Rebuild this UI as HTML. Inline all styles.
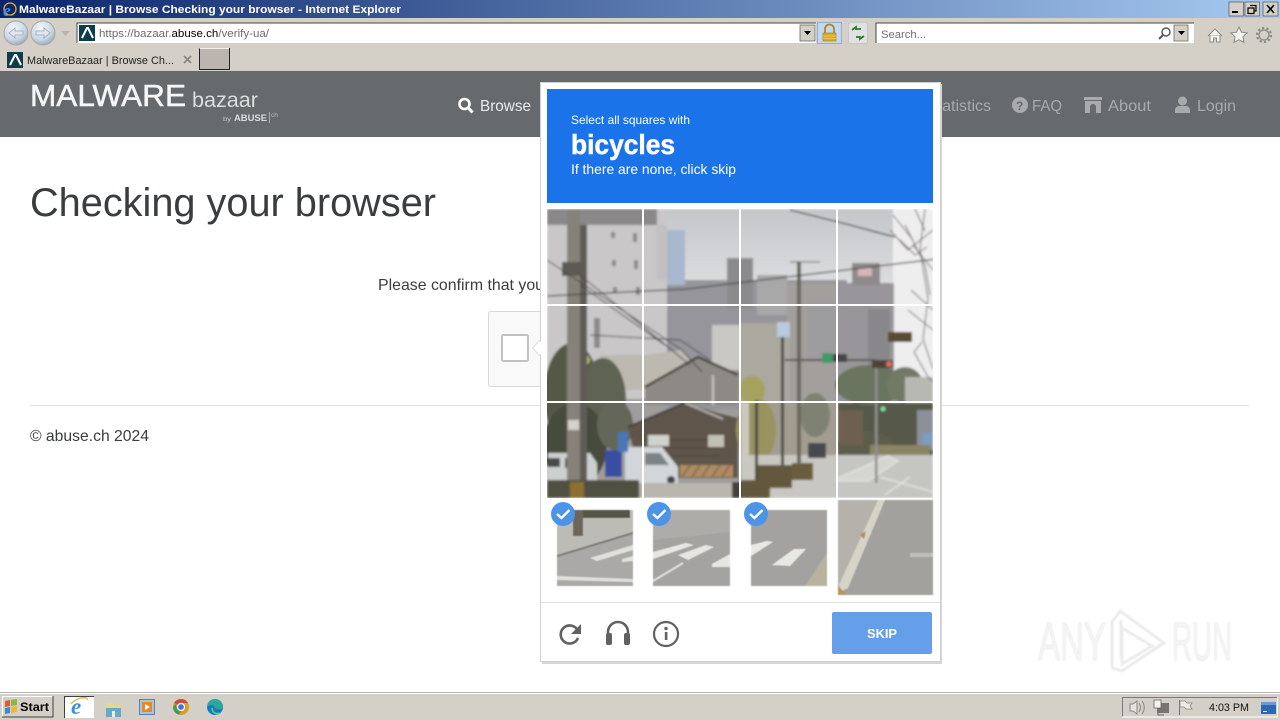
<!DOCTYPE html>
<html><head><meta charset="utf-8"><title>MalwareBazaar | Browse Checking your browser</title>
<style>html,body{margin:0;padding:0;background:#fff;overflow:hidden}svg{display:block;font-family:"Liberation Sans",sans-serif}</style></head>
<body>
<svg xmlns="http://www.w3.org/2000/svg" width="1280" height="720" viewBox="0 0 1280 720">
<defs>
<linearGradient id="tb" x1="0" x2="1" y1="0" y2="0"><stop offset="0" stop-color="#0a246a"/><stop offset="1" stop-color="#a6caf0"/></linearGradient>
<linearGradient id="sky" x1="0" x2="0" y1="0" y2="1"><stop offset="0" stop-color="#c4c6c9"/><stop offset="1" stop-color="#e6e7e8"/></linearGradient>
<radialGradient id="nb" cx=".4" cy=".3" r=".8"><stop offset="0" stop-color="#f4f7fb"/><stop offset=".6" stop-color="#c9d6e6"/><stop offset="1" stop-color="#8d9aa8"/></radialGradient>
<filter id="bl"><feGaussianBlur stdDeviation="1"/></filter>
<filter id="wb" x="-10%" y="-10%" width="120%" height="120%"><feGaussianBlur stdDeviation=".6"/></filter>
<clipPath id="c1"><rect x="557" y="510" width="76" height="76"/></clipPath>
<clipPath id="c2"><rect x="653" y="510" width="77" height="76"/></clipPath>
<clipPath id="c3"><rect x="751" y="510" width="76" height="76"/></clipPath>
<clipPath id="c4"><rect x="838" y="500" width="95" height="95"/></clipPath>
<clipPath id="cm"><rect x="547" y="209" width="386" height="289"/></clipPath>
</defs>

<rect width="1280" height="720" fill="#fff"/>

<!-- title bar -->
<rect width="1280" height="18" fill="url(#tb)"/>
<g>
<circle cx="10" cy="9" r="6" fill="none" stroke="#e0b030" stroke-width="1.3"/>
<text x="3" y="16" font-size="17" font-weight="bold" font-style="italic" fill="#3f8fd8" font-family="Liberation Serif">e</text>
<text x="19" y="13" font-size="11" font-weight="bold" fill="#fff" textLength="382" lengthAdjust="spacingAndGlyphs">MalwareBazaar | Browse Checking your browser - Internet Explorer</text>
</g>
<g stroke="#404040" stroke-width=".6">
<rect x="1229" y="2" width="14.5" height="14" fill="#d4d0c8"/><rect x="1245" y="2" width="14.5" height="14" fill="#d4d0c8"/><rect x="1263" y="2" width="15" height="14" fill="#d4d0c8"/>
</g>
<rect x="1232" y="11" width="6" height="2" fill="#000"/>
<path d="M1250 5.500h6v5.500h-2M1248 8h6v5.500h-6z" fill="none" stroke="#000" stroke-width="1.200"/>
<path d="M1267 5l7 8M1274 5l-7 8" stroke="#000" stroke-width="1.600"/>

<!-- toolbar -->
<rect y="18" width="1280" height="53" fill="#d4d0c8"/>
<circle cx="16" cy="33" r="12" fill="url(#nb)" stroke="#a9a8a2"/>
<circle cx="43" cy="33" r="12" fill="url(#nb)" stroke="#a9a8a2"/>
<path d="M9 33l6-5v3h8v4h-8v3z" fill="#dfe6ef" stroke="#9aa7b5" stroke-width=".8"/>
<path d="M50 33l-6-5v3h-8v4h8v3z" fill="#dfe6ef" stroke="#9aa7b5" stroke-width=".8"/>
<path d="M61 31h9l-4.500 5z" fill="#b8b4ac"/>

<rect x="77" y="23" width="739" height="20" fill="#fff"/>
<path d="M77 43V23h739" fill="none" stroke="#48453f" stroke-width="1"/>
<rect x="79" y="25" width="16" height="16" fill="#0e3e4c"/>
<path d="M82 38l5-10 1 0 5 10" fill="none" stroke="#fff" stroke-width="2"/>
<text x="99" y="37" font-size="11" fill="#6b6b6b" textLength="170" lengthAdjust="spacingAndGlyphs">https://bazaar.<tspan fill="#000">abuse.ch</tspan>/verify-ua/</text>
<rect x="800" y="25" width="15" height="16" fill="#d4d0c8" stroke="#6a6a66" stroke-width=".8"/>
<path d="M804 31h7l-3.500 4z" fill="#000"/>
<rect x="817.500" y="22.500" width="24" height="21" fill="#c3d7ef" stroke="#90afd2"/>
<rect x="823" y="33" width="13" height="8" fill="#d9a920" stroke="#a9801a" stroke-width=".6"/>
<path d="M825 33v-4a4.500 4.500 0 0 1 9 0v4" fill="none" stroke="#b08820" stroke-width="1.800"/>
<path d="M823 36h13M823 38.500h13" stroke="#f0d060" stroke-width=".7"/>
<rect x="848.500" y="22.500" width="19" height="21" rx="2" fill="#dfe1e3" stroke="#c4c6c8"/>
<path d="M852 30l4-3v2h5M864 36l-4 3v-2h-4" fill="none" stroke="#2a7a2a" stroke-width="1.800"/>
<rect x="876" y="23" width="318" height="20" fill="#fff"/>
<path d="M876 43V23h318" fill="none" stroke="#48453f"/>
<text x="881" y="38" font-size="11" fill="#6e6e6e" textLength="45" lengthAdjust="spacingAndGlyphs">Search...</text>
<circle cx="1166" cy="32" r="4" fill="none" stroke="#5a5a5a" stroke-width="1.500"/>
<path d="M1163 35l-4 4" stroke="#5a5a5a" stroke-width="2"/>
<rect x="1174" y="25" width="14" height="16" fill="#d4d0c8" stroke="#6a6a66" stroke-width=".8"/>
<path d="M1178 31h7l-3.500 4z" fill="#000"/>
<path d="M1208 36l7-7 7 7M1210 35v7h3.500v-4h3v4h3.500v-7" fill="#f6f5f2" stroke="#8a8a86" stroke-width="1"/>
<path d="M1239 27l2.500 5.200 5.600.7-4.100 3.900 1 5.600-5-2.700-5 2.700 1-5.600-4.100-3.900 5.600-.7z" fill="#f4f3f0" stroke="#8a8a86" stroke-width="1"/>
<circle cx="1264" cy="35" r="5" fill="none" stroke="#8a8a86" stroke-width="1.300"/>
<circle cx="1264" cy="35" r="7" fill="none" stroke="#8a8a86" stroke-width="2.200" stroke-dasharray="2.200 2.200"/>

<!-- tabs -->
<rect x="7" y="52" width="16" height="16" fill="#0e3e4c"/>
<path d="M10 65l5-10 1 0 5 10" fill="none" stroke="#fff" stroke-width="2"/>
<text x="27" y="64" font-size="11" fill="#222" textLength="147" lengthAdjust="spacingAndGlyphs">MalwareBazaar | Browse Ch...</text>
<path d="M184 56l7 7M191 56l-7 7" stroke="#8a8885" stroke-width="1.800"/>
<rect x="200" y="49" width="30" height="21" fill="#bcb5af"/>
<path d="M199.500 70V48.500M200 69.500h30M229.500 48v22" stroke="#222" fill="none"/>
<path d="M200 48.500h29" stroke="#f0eeea"/>

<!-- nav -->
<rect y="71" width="1280" height="66" fill="#666a6d"/>
<text x="30" y="106" font-size="30.500" fill="#f6f6f6" stroke="#f6f6f6" stroke-width=".5" textLength="156" lengthAdjust="spacingAndGlyphs">MALWARE</text>
<text x="192" y="107" font-size="21" fill="#dcdddd" textLength="66" lengthAdjust="spacingAndGlyphs">bazaar</text>
<text x="223" y="121" font-size="6" fill="#c9caca" textLength="8" lengthAdjust="spacingAndGlyphs">by</text>
<text x="234" y="121" font-size="9" font-weight="bold" fill="#dcdddd" textLength="33" lengthAdjust="spacingAndGlyphs">ABUSE</text>
<path d="M269.500 112v11" stroke="#c9caca" stroke-width=".7"/>
<text x="271" y="117" font-size="6" fill="#b9baba" textLength="7" lengthAdjust="spacingAndGlyphs">ch</text>
<circle cx="464.500" cy="104" r="5" fill="none" stroke="#fff" stroke-width="2.600"/>
<path d="M468.500 108l4 4.500" stroke="#fff" stroke-width="3"/>
<text x="480" y="111" font-size="16" fill="#ececec" textLength="51" lengthAdjust="spacingAndGlyphs">Browse</text>
<text x="927" y="111" font-size="16" fill="#a8aaac" textLength="64" lengthAdjust="spacingAndGlyphs">Statistics</text>
<circle cx="1020" cy="105" r="8" fill="#a8aaac"/>
<text x="1016" y="110" font-size="12" font-weight="bold" fill="#666a6d">?</text>
<text x="1032" y="111" font-size="16" fill="#a8aaac" textLength="30" lengthAdjust="spacingAndGlyphs">FAQ</text>
<path d="M1084 97h18v3h-18zM1085 101h16v12h-5v-6a3 3 0 0 0-6 0v6h-5z" fill="#a8aaac"/>
<text x="1108" y="111" font-size="16" fill="#a8aaac" textLength="43" lengthAdjust="spacingAndGlyphs">About</text>
<circle cx="1182.500" cy="101" r="4.500" fill="#a8aaac"/>
<path d="M1175 113v-3a4 4 0 0 1 4-4h7a4 4 0 0 1 4 4v3z" fill="#a8aaac"/>
<text x="1197" y="111" font-size="16" fill="#a8aaac" textLength="39" lengthAdjust="spacingAndGlyphs">Login</text>

<!-- page -->
<text x="30" y="216" font-size="40" fill="#3a3d40" textLength="406" lengthAdjust="spacingAndGlyphs">Checking your browser</text>
<text x="378" y="290" font-size="16" fill="#3a3d40" textLength="166" lengthAdjust="spacingAndGlyphs">Please confirm that you</text>
<rect x="488.500" y="311.500" width="60" height="75" rx="2" fill="#f9f9f9" stroke="#d8d8d8"/>
<rect x="502" y="335" width="26" height="26" rx="1.500" fill="#fff" stroke="#c1c1c1" stroke-width="2"/>
<rect x="30" y="405" width="1219" height="1" fill="#e4e4e4"/>
<text x="30" y="441" font-size="16" fill="#3a3d40" textLength="119" lengthAdjust="spacingAndGlyphs">© abuse.ch 2024</text>

<!-- watermark -->
<g fill="none" stroke="#ececec" stroke-width="1.100" filter="url(#wb)">
<text x="1038" y="660" font-size="54" textLength="68" lengthAdjust="spacingAndGlyphs" fill="#f5f5f5">ANY</text>
<text x="1172" y="660" font-size="54" textLength="60" lengthAdjust="spacingAndGlyphs" fill="#f5f5f5">RUN</text>
<path d="M1112 668V622l8-11 44 32-12 8M1121 620v38M1112 668l10 3 40-27" stroke-width="3"/>
<path d="M1122 628l30 18-30 18z" stroke-width="3"/>
</g>

<!-- dialog -->
<path d="M540 340l-7.500 8 7.500 8" fill="#fff" stroke="#dcdcdc"/>
<rect x="542" y="84" width="400" height="580" fill="#d6d6d6"/>
<rect x="540.500" y="82.500" width="400" height="579" fill="#fff" stroke="#d0d0d0"/>
<path d="M541 341.500l-7 6.500 7 6.500z" fill="#fff"/>
<rect x="547" y="89" width="386" height="114" fill="#1a73e8"/>
<text x="571" y="124" font-size="12" fill="#fff" textLength="119" lengthAdjust="spacingAndGlyphs">Select all squares with</text>
<text x="571" y="154" font-size="28" font-weight="bold" fill="#fff" stroke="#fff" stroke-width=".5" textLength="104" lengthAdjust="spacingAndGlyphs">bicycles</text>
<text x="571" y="174" font-size="14" fill="#fff" textLength="165" lengthAdjust="spacingAndGlyphs">If there are none, click skip</text>

<!-- photo main -->
<g clip-path="url(#cm)"><g filter="url(#bl)">
<rect x="547" y="209" width="386" height="289" fill="#a09e9c"/>
<rect x="644" y="209" width="289" height="110" fill="url(#sky)"/>
<rect x="893" y="209" width="40" height="180" fill="#eeeeef"/>
<!-- background buildings -->
<rect x="667" y="280" width="180" height="130" fill="#96959b"/>
<rect x="657" y="230" width="28" height="55" fill="#a9b8cd"/>
<rect x="727" y="258" width="26" height="50" fill="#8b8a8d"/>
<rect x="757" y="275" width="30" height="40" fill="#a9a8a9"/>
<rect x="787" y="283" width="50" height="120" fill="#a29f9c"/>
<rect x="837" y="283" width="57" height="100" fill="#98969a"/>
<rect x="852" y="263" width="28" height="22" fill="#8f8a8c"/>
<rect x="858" y="268" width="14" height="8" fill="#d4b6b8"/>
<rect x="712" y="325" width="28" height="45" fill="#c9c8c4"/>
<rect x="740" y="323" width="50" height="85" fill="#aba89f"/>
<rect x="808" y="301" width="28" height="60" fill="#9d9c9e"/>
<rect x="868" y="309" width="22" height="60" fill="#88878a"/>
<!-- left building -->
<rect x="547" y="209" width="120" height="190" fill="#c9c7c8"/>
<rect x="547" y="209" width="100" height="16" fill="#8a8889"/>
<rect x="644" y="209" width="13" height="16" fill="#8a8889"/>
<path d="M657 225h10v55h-10z" fill="#c2c0c0"/>
<g fill="#8d8b8a"><rect x="611" y="232" width="4" height="6"/><rect x="633" y="233" width="4" height="9"/><rect x="612" y="260" width="4" height="6"/><rect x="634" y="260" width="4" height="9"/><rect x="613" y="287" width="4" height="6"/><rect x="636" y="287" width="4" height="8"/><rect x="594" y="318" width="6" height="30"/></g>
<!-- far side beige low bldg -->
<path d="M600 355h46l35-5 15 15-50 25h-46z" fill="#bdb9b0"/>
<!-- tree left -->
<ellipse cx="572" cy="395" rx="28" ry="52" fill="#545947"/>
<ellipse cx="603" cy="400" rx="23" ry="42" fill="#5f6351"/>
<ellipse cx="575" cy="445" rx="32" ry="42" fill="#474c3d"/>
<ellipse cx="615" cy="425" rx="18" ry="25" fill="#636658"/>
<circle cx="585" cy="360" r="5" fill="#b4b066"/>
<!-- gray house -->
<path d="M645 387l53-30 40 18v30h-93z" fill="#8d8a85"/>
<path d="M645 387l53-30 40 18" fill="none" stroke="#4a423c" stroke-width="2.500"/>
<path d="M713 375v30" stroke="#c7c7c7" stroke-width="2"/>
<!-- brown house -->
<path d="M628 427l57-24 33 10 20 5v60h-98z" fill="#5f544c"/>
<path d="M628 427l57-24 38 16" fill="none" stroke="#453d38" stroke-width="2"/>
<path d="M685 403l38 16" stroke="#b5b5b2" stroke-width="2"/>
<path d="M645 440h75M645 448h75M645 456h75" stroke="#4d433d" stroke-width="1"/>
<rect x="648" y="435" width="21" height="11" fill="#d0d2ce"/>
<rect x="680" y="465" width="53" height="12" fill="#b08c62"/>
<path d="M690 465l-8 12M700 465l-8 12M710 465l-8 12M720 465l-8 12M730 465l-8 12" stroke="#8e6e55" stroke-width="2"/>
<rect x="708" y="435" width="16" height="12" fill="#c2c0b4"/>
<!-- vans -->
<path d="M548 453h42l7 10v17h-49z" fill="#cdd0d1"/>
<path d="M548 458h12v9h-12zM565 458h14v10h-14z" fill="#4a4a48"/>
<rect x="572" y="470" width="14" height="6" fill="#c25a50"/>
<path d="M625 447h37l16 20v16h-53z" fill="#d2d6d8"/>
<path d="M645 453h15l9 12h-24z" fill="#7d8284"/>
<circle cx="671" cy="480" r="4" fill="#444"/>
<rect x="605" y="450" width="17" height="27" fill="#3b4ea0"/>
<rect x="618" y="432" width="10" height="20" fill="#4a76b5"/>
<!-- road/hedge -->
<rect x="640" y="483" width="95" height="15" fill="#b8b6ae"/>
<rect x="547" y="480" width="92" height="18" fill="#4f4f42"/>
<rect x="732" y="482" width="9" height="16" fill="#444037"/>
<rect x="570" y="482" width="14" height="16" fill="#8c6f30"/>
<!-- right middle -->
<path d="M741 403h97v60h-97z" fill="#a29d90"/>
<ellipse cx="756" cy="430" rx="20" ry="32" fill="#989360"/>
<ellipse cx="752" cy="390" rx="13" ry="14" fill="#a6a260"/>
<ellipse cx="815" cy="415" rx="15" ry="22" fill="#7f8273"/>
<rect x="741" y="455" width="97" height="43" fill="#c9c7c1"/>
<path d="M741 403h8v60h-8z" fill="#ccc9bf"/>
<rect x="808" y="443" width="18" height="15" fill="#46494e"/>
<rect x="758" y="465" width="34" height="23" fill="#63593c"/>
<rect x="792" y="463" width="21" height="17" fill="#6a5d3c"/>
<rect x="741" y="480" width="29" height="18" fill="#63593c"/>
<rect x="755" y="400" width="3" height="80" fill="#4c4842"/>
<rect x="781" y="337" width="3" height="128" fill="#4e4a48"/>
<rect x="797" y="262" width="4" height="203" fill="#6c675f"/>
<rect x="777" y="322" width="13" height="15" fill="#b8cadb"/>
<!-- right trees -->
<rect x="838" y="403" width="95" height="54" fill="#565949"/>
<ellipse cx="865" cy="445" rx="28" ry="14" fill="#5d5d4c"/>
<rect x="838" y="410" width="25" height="35" fill="#6d6150"/>
<rect x="917" y="410" width="16" height="40" fill="#8d9098"/>
<rect x="922" y="433" width="11" height="12" fill="#7d9cc0"/>
<rect x="838" y="455" width="95" height="43" fill="#c5c5c2"/>
<rect x="870" y="445" width="60" height="10" fill="#8b8463"/>
<path d="M838 478l50-22 10 5-30 20h-30zM880 477l53 15M885 495l25-18" stroke="#e2e2de" stroke-width="1.500" fill="#d5d5d2"/>
<ellipse cx="870" cy="385" rx="35" ry="20" fill="#6b7560"/>
<ellipse cx="905" cy="385" rx="18" ry="18" fill="#727a66"/>
<rect x="905" y="377" width="28" height="26" fill="#b7b8b2"/>
<rect x="875" y="368" width="2.500" height="115" fill="#8f8f8f"/>
<circle cx="883" cy="409" r="2.500" fill="#7fe09a"/>
<!-- traffic signals -->
<rect x="785" y="359" width="90" height="2" fill="#5a5650"/>
<rect x="822" y="353" width="11" height="10" rx="2" fill="#3f9a6c"/>
<rect x="833" y="354" width="14" height="8" fill="#444"/>
<rect x="872" y="360" width="21" height="8" fill="#4d4038"/>
<circle cx="889" cy="364" r="3" fill="#d8705a"/>
<rect x="888" y="332" width="24" height="10" fill="#5a4c36"/>
<!-- main pole -->
<rect x="567" y="209" width="13" height="271" fill="#86827a"/>
<rect x="580" y="225" width="7" height="255" fill="#5e5b56"/>
<rect x="568" y="420" width="11" height="10" fill="#d4d2cc"/>
<rect x="562" y="262" width="24" height="14" fill="#5d5a57"/>
<!-- wires -->
<g fill="none" stroke="#45423f" stroke-width="1">
<path d="M547 296l140-7 250-30" stroke-width="1.300"/>
<path d="M547 260l135 90 20 22"/>
<path d="M580 275l110 90"/>
<path d="M590 335l90 5 30 20"/>
<path d="M790 210l60 15 45 12" stroke-width="1.400"/>
<path d="M790 262h30"/>
<path d="M580 285l85 60"/>
</g>
<!-- branches -->
<g fill="none" stroke="#6d6660" stroke-width="1">
<path d="M925 209l-5 40 8 50 -5 40 10 30"/>
<path d="M905 225l20 40 5 30"/><path d="M933 230l-25 20-18-20"/><path d="M933 270l-20-25"/><path d="M933 310l-22-20"/><path d="M922 342l-8 10 14 25 5 5"/><path d="M893 215l20 25"/><path d="M933 330l-25-20"/><path d="M915 209l10 22"/><path d="M900 240l15 15 12-8"/>
</g>
</g></g>

<!-- grid lines -->
<g fill="#fff">
<rect x="642" y="209" width="2" height="289"/><rect x="739" y="209" width="2" height="289"/><rect x="836" y="209" width="2" height="289"/>
<rect x="547" y="304" width="386" height="2"/><rect x="547" y="401" width="386" height="2"/>
</g>

<!-- selected tiles -->
<g filter="url(#wb)">
<g clip-path="url(#c1)">
<rect x="557" y="510" width="76" height="76" fill="#aaa9a7"/>
<path d="M557 510h76v23l-76 23z" fill="#bdbbb6"/>
<rect x="583" y="510" width="47" height="8" fill="#54544a"/>
<rect x="573" y="510" width="10" height="26" fill="#6d655a"/>
<path d="M557 556l76-23" stroke="#7d7b76" stroke-width="2"/>
<path d="M590 558l43-13 0 5-36 11zM622 559l11-3v5l-11 1z" fill="#e0e0dc"/>
<path d="M557 576l76 3v3l-76-2z" fill="#e0dfdc"/>
</g>
<g clip-path="url(#c2)">
<rect x="653" y="510" width="77" height="76" fill="#a4a3a1"/>
<path d="M653 510h77v22l-77 8z" fill="#aeaca9"/>
<path d="M653 552l33-9 8 2-41 14zM678 555l28-10 8 2-26 13zM712 564l18-10v13h-18z" fill="#e6e6e2"/>
<path d="M653 581l30-18" stroke="#dededa" stroke-width="2"/>
</g>
<g clip-path="url(#c3)">
<rect x="751" y="510" width="76" height="76" fill="#a3a2a0"/>
<path d="M751 545l16-4 6 1-22 14zM772 565l22-16h12l-16 17z" fill="#e8e8e4"/>
<path d="M827 553v33h-22z" fill="#b9b29f"/>
</g>
<g clip-path="url(#c4)">
<rect x="838" y="500" width="95" height="95" fill="#a2a19d"/>
<path d="M838 500h45l-45 90z" fill="#b4b2aa"/>
<path d="M878 500h7l-37 88-8 4 -2-5z" fill="#d7d3c6"/>
<path d="M860 535l6-4-2 8z" fill="#b08f58"/>
<rect x="910" y="553" width="23" height="4" fill="#c0bfb9"/>
<path d="M838 595h8l-8-10z" fill="#b8935a"/>
</g>
</g>

<!-- check badges -->
<g>
<circle cx="563" cy="514" r="12" fill="#4d94e8"/><circle cx="659" cy="514" r="12" fill="#4d94e8"/><circle cx="756" cy="514" r="12" fill="#4d94e8"/>
<g fill="none" stroke="#fff" stroke-width="2.400"><path d="M557 514l4.500 4 8-8"/><path d="M653 514l4.500 4 8-8"/><path d="M750 514l4.500 4 8-8"/></g>
</g>

<!-- footer -->
<rect x="541" y="602" width="399" height="1" fill="#e0e0e0"/>
<path d="M578 631a9 9 0 1 0 0 7" fill="none" stroke="#616161" stroke-width="2.600"/>
<path d="M581 624v10h-10z" fill="#616161"/>
<path d="M608 643v-11a10 10 0 0 1 20 0v11" fill="none" stroke="#616161" stroke-width="2.600"/>
<rect x="606" y="633" width="6" height="12" rx="2" fill="#616161"/><rect x="624" y="633" width="6" height="12" rx="2" fill="#616161"/>
<circle cx="666" cy="634" r="12" fill="none" stroke="#616161" stroke-width="2.200"/>
<rect x="664.800" y="632" width="2.600" height="8" fill="#616161"/><circle cx="666" cy="628.500" r="1.700" fill="#616161"/>
<rect x="832" y="612" width="100" height="42" rx="2" fill="#659fea"/>
<text x="867" y="638" font-size="13" font-weight="bold" fill="#fff" textLength="30" lengthAdjust="spacingAndGlyphs">SKIP</text>

<!-- taskbar -->
<rect y="692" width="1280" height="28" fill="#d4d0c8"/>
<rect y="692" width="1280" height="1" fill="#b8b5ae"/>
<rect y="693" width="1280" height="1" fill="#fff"/>
<rect x="2" y="696" width="51" height="21" fill="#d4d0c8"/>
<path d="M2.500 717V696.500H53" stroke="#fff" fill="none"/><path d="M53 696v21H2" stroke="#404040" fill="none"/>
<path d="M5 701l5-1v6l-5 1z" fill="#e05a2a"/><path d="M11 700l6-1v6l-6 1z" fill="#8cb83a"/><path d="M5 708l5-1v6l-5 1z" fill="#3a8ad8"/><path d="M11 707l6-1v6l-6 1z" fill="#f0b830"/>
<text x="20" y="711" font-size="12" font-weight="bold" fill="#000" textLength="29" lengthAdjust="spacingAndGlyphs">Start</text>
<rect x="64" y="696" width="30" height="22" fill="#fff"/>
<path d="M64.500 718V696.500H94" stroke="#404040" fill="none"/>
<text x="71" y="714" font-size="23" font-weight="bold" font-style="italic" fill="#3f8fd8" font-family="Liberation Serif">e</text>
<path d="M71 704c6-7 18-8 16-4" fill="none" stroke="#e0b030" stroke-width="1.300"/>
<path d="M106 703h6l2 2h7v12h-15z" fill="#e8d88a"/><rect x="106" y="708" width="15" height="9" fill="#6aa8c8"/><rect x="112" y="711" width="3" height="6" fill="#f0eee0"/>
<rect x="139.500" y="699.500" width="15" height="15" fill="#a8c4e0" stroke="#6080b0"/><rect x="142" y="702" width="10" height="10" fill="#e88820"/><path d="M145 704l5 3-5 3z" fill="#fff"/>
<circle cx="181" cy="707" r="8" fill="#d8a020"/><path d="M181 699a8 8 0 0 1 7 4h-7a4 4 0 0 0-3.500 2l-3.400-2a8 8 0 0 1 6.900-4z" fill="#d04a3a"/><path d="M173 707a8 8 0 0 0 6 7.800l3-5-5-1-1.500-4.800z" fill="#4a9a4a"/><circle cx="181" cy="707" r="3.500" fill="#3a78d8" stroke="#fff" stroke-width="1.200"/>
<circle cx="215" cy="707" r="8" fill="#1878c8"/><path d="M207 707a8 8 0 0 1 16 0c0 2-3 3-6 2-4-1-2-4-5-4s-5 2-5 2z" fill="#2aa8a0"/><path d="M212 708c0 4 4 7 8 5" fill="none" stroke="#50d070" stroke-width="1.800"/>

<!-- tray -->
<path d="M1122.500 717V697.500H1277" stroke="#7a7872" fill="none"/><path d="M1277.500 697v20H1122" stroke="#fff" fill="none"/>
<path d="M1130 704h3l4-3v13l-4-3h-3z" fill="#e6e4de" stroke="#8a8882"/>
<path d="M1139 703c2 3 2 6 0 9M1142 701c3 4 3 9 0 13" fill="none" stroke="#8a8882" stroke-width="1"/>
<rect x="1157" y="703" width="12" height="10" fill="#77756f"/>
<path d="M1154 700h7v8h-7z" fill="#f4f2ec" stroke="#66645e" stroke-width=".8"/><path d="M1158 713v2h6" stroke="#66645e" fill="none"/>
<path d="M1179.500 700v15" stroke="#77756f"/><path d="M1180 701h5l2 2h5l-2 3 2 3h-6l-2-2h-4z" fill="#eeece6" stroke="#8a8882" stroke-width=".8"/>
<text x="1209" y="711" font-size="11" fill="#111" textLength="40" lengthAdjust="spacingAndGlyphs">4:03 PM</text>
<rect x="1261" y="702" width="15" height="12" fill="#2a6ab8"/><rect x="1261" y="702" width="15" height="3" fill="#6a9ad0"/><rect x="1263" y="711" width="4" height="1" fill="#e8e8e8"/>
</svg>
</body></html>
